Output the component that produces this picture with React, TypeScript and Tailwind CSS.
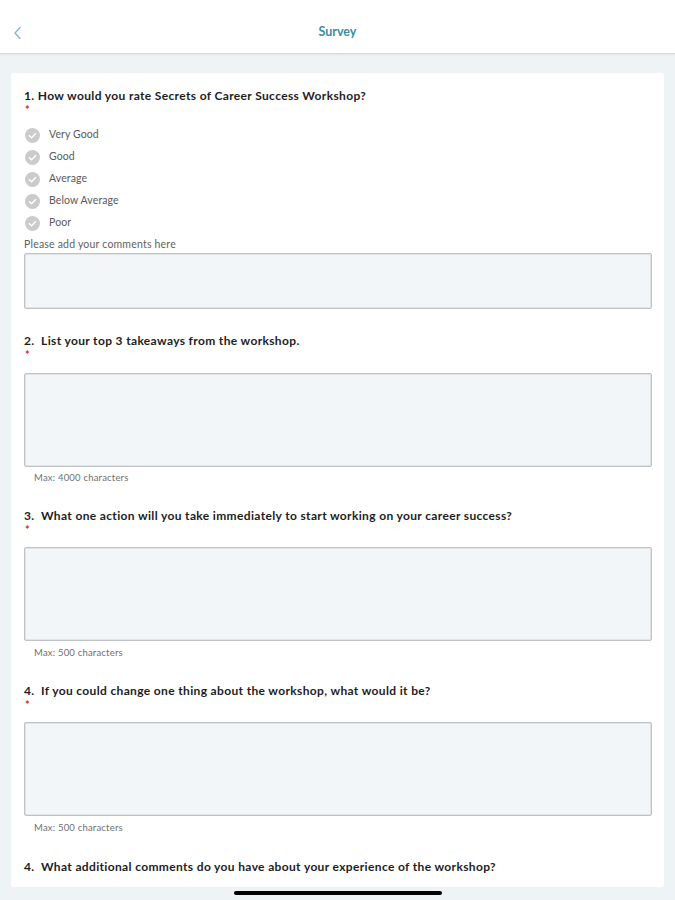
import React from "react";

const options = ["Very Good", "Good", "Average", "Below Average", "Poor"];

function Required() {
  return <div className="h-[14px] pl-[1px] text-[11px] font-bold leading-[14px] text-[#e0242b]">*</div>;
}

function Question({ text, className = "" }: { text: string; className?: string }) {
  return (
    <div className={"h-[14px] whitespace-pre text-[12px] font-bold leading-[14px] tracking-[0.35px] text-[#1d1d1f] " + className}>{text}</div>
  );
}

function TextBox({ height, className = "" }: { height: string; className?: string }) {
  return <div className={"rounded-[2px] border border-[#bfc3c6] bg-[#f2f6f9] shadow-[inset_0_0_0_0.5px_#cfd3d6] " + height + " " + className} />;
}

function Hint({ text, className = "" }: { text: string; className?: string }) {
  return <div className={"h-[12px] pl-[10px] text-[9.5px] leading-[12px] tracking-[0.2px] text-[#6f6f6f] " + className}>{text}</div>;
}

function CheckCircle() {
  return (
    <svg width="15" height="15" viewBox="0 0 16 16">
      <circle cx="8" cy="8" r="8" fill="#cbcbcb" />
      <path d="M4.6 8.2 L7 10.5 L11.4 5.8" fill="none" stroke="#fff" strokeWidth="1.5" strokeLinecap="round" strokeLinejoin="round" />
    </svg>
  );
}

export default function App() {
  return (
    <div className="relative h-[900px] w-[675px] overflow-hidden bg-[#eef3f6] font-['Lato','Noto_Sans',sans-serif]">
      {/* header */}
      <div className="relative flex h-[54px] items-center justify-center border-b border-[#d5d9dc] bg-white shadow-[0_1px_2px_rgba(0,0,0,0.06)]">
        <svg className="absolute left-[13px] top-[26px]" width="9" height="14" viewBox="0 0 9 14">
          <path d="M7 1.5 L2 7 L7 12.5" fill="none" stroke="#8db6c6" strokeWidth="1.4" strokeLinecap="round" strokeLinejoin="round" />
        </svg>
        <span className="mt-[12px] text-[12.5px] font-bold text-[#3b8da2]">Survey</span>
      </div>

      <div className="px-[11px] pt-[19px]">
        <div className="h-[814px] overflow-hidden rounded-[3px] bg-white pl-[13px] pr-[12px] pt-[16px]">
          <Question text="1. How would you rate Secrets of Career Success Workshop?" />
          <Required />
          <div className="mt-[7px]">
            {options.map((o) => (
              <div key={o} className="flex h-[22px] items-center">
                <div className="ml-[1px]">
                  <CheckCircle />
                </div>
                <span className="ml-[9px] text-[10.5px] tracking-[0.1px] text-[#5a5a5a]">{o}</span>
              </div>
            ))}
          </div>
          <div className="mt-[4px] h-[12px] text-[10.5px] leading-[12px] tracking-[0.2px] text-[#5f5f5f]">Please add your comments here</div>
          <TextBox height="h-[56px]" className="mt-[3px]" />

          <Question text="2.  List your top 3 takeaways from the workshop." className="mt-[25px]" />
          <Required />
          <TextBox height="h-[94px]" className="mt-[11px]" />
          <Hint text="Max: 4000 characters" className="mt-[5px]" />

          <Question text="3.  What one action will you take immediately to start working on your career success?" className="mt-[25px]" />
          <Required />
          <TextBox height="h-[94px]" className="mt-[10px]" />
          <Hint text="Max: 500 characters" className="mt-[6px]" />

          <Question text="4.  If you could change one thing about the workshop, what would it be?" className="mt-[25px]" />
          <Required />
          <TextBox height="h-[94px]" className="mt-[10px]" />
          <Hint text="Max: 500 characters" className="mt-[6px]" />

          <Question text="4.  What additional comments do you have about your experience of the workshop?" className="mt-[26px]" />
        </div>
      </div>

      {/* home indicator */}
      <div className="absolute bottom-[5px] left-[234px] h-[4px] w-[208px] rounded-full bg-black" />
    </div>
  );
}
